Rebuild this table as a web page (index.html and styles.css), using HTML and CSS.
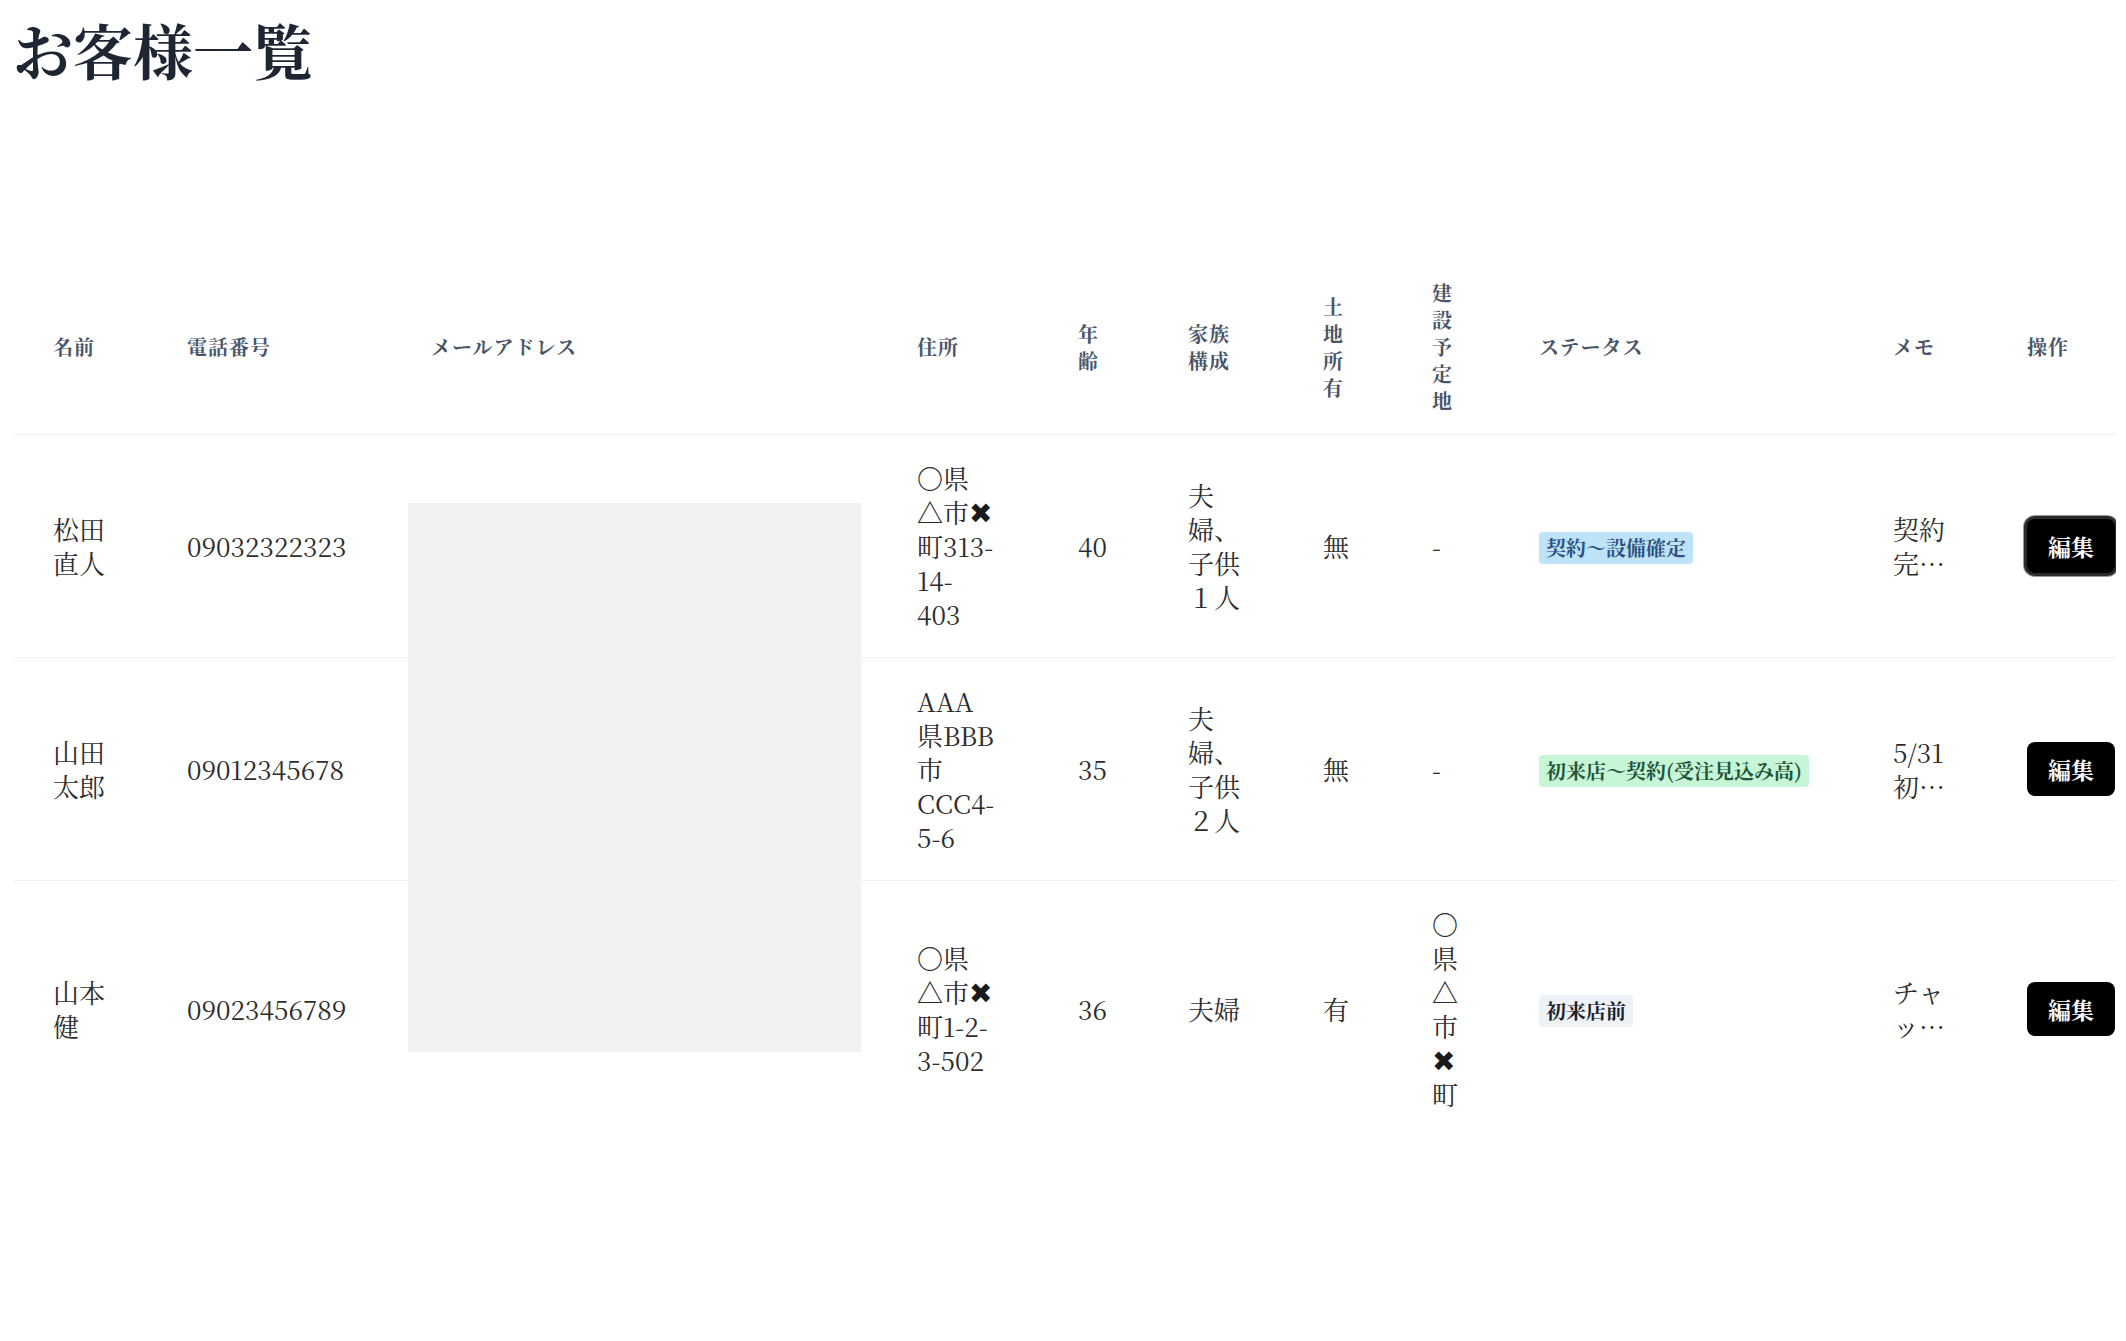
FILE: index.html
```html
<!DOCTYPE html>
<html lang="ja">
<head>
<meta charset="utf-8">
<title>お客様一覧</title>
<link rel="stylesheet" href="styles.css">
</head>
<body>
<div class="page">
  <h1 class="title">お客様一覧</h1>
  <div class="table-wrap">
    <table class="customers">
      <colgroup>
        <col class="c-name"><col class="c-phone"><col class="c-email"><col class="c-addr"><col class="c-age"><col class="c-family"><col class="c-land"><col class="c-site"><col class="c-status"><col class="c-memo"><col class="c-op">
      </colgroup>
      <thead>
        <tr>
          <th>名前</th><th>電話番号</th><th>メールアドレス</th><th>住所</th><th>年齢</th><th>家族構成</th><th>土地所有</th><th>建設予定地</th><th>ステータス</th><th>メモ</th><th>操作</th>
        </tr>
      </thead>
      <tbody>
        <tr>
          <td>松田直人</td>
          <td>09032322323</td>
          <td></td>
          <td>〇県<br>△市<span class="x">✖</span><br>町313-<br>14-<br>403</td>
          <td>40</td>
          <td>夫婦、子供１人</td>
          <td>無</td>
          <td>-</td>
          <td><span class="badge badge-blue">契約〜設備確定</span></td>
          <td><div class="memo">契約完了済み</div></td>
          <td><button class="edit edit-focus" type="button">編集</button></td>
        </tr>
        <tr>
          <td>山田太郎</td>
          <td>09012345678</td>
          <td></td>
          <td>AAA<br>県BBB<br>市<br>CCC4-<br>5-6</td>
          <td>35</td>
          <td>夫婦、子供２人</td>
          <td>無</td>
          <td>-</td>
          <td><span class="badge badge-green">初来店〜契約(受注見込み高)</span></td>
          <td><div class="memo">5/31初回来店</div></td>
          <td><button class="edit" type="button">編集</button></td>
        </tr>
        <tr>
          <td>山本健</td>
          <td>09023456789</td>
          <td></td>
          <td>〇県<br>△市<span class="x">✖</span><br>町1-2-<br>3-502</td>
          <td>36</td>
          <td>夫婦</td>
          <td>有</td>
          <td>〇県△市<span class="x">✖</span>町</td>
          <td><span class="badge badge-gray">初来店前</span></td>
          <td><div class="memo">チャット問い合わせ</div></td>
          <td><button class="edit" type="button">編集</button></td>
        </tr>
      </tbody>
    </table>
    <div class="mask"></div>
  </div>
</div>
</body>
</html>
```

FILE: styles.css
```css
html, body {
  margin: 0;
  padding: 0;
  background: #ffffff;
}

body {
  font-family: "Noto Serif CJK JP", "Liberation Serif", "Noto Sans CJK JP", serif;
  color: #2d2d2d;
}

.page {
  padding: 13px 10px 40px 13px;
}

.title {
  margin: 0;
  font-size: 60px;
  line-height: 72px;
  font-weight: 700;
  color: #1f2633;
}

.table-wrap {
  position: relative;
  margin-top: 174px;
  overflow: hidden;
}

.customers {
  width: 100%;
  table-layout: fixed;
  border-collapse: collapse;
}

.c-name { width: 134px; }
.c-phone { width: 244px; }
.c-email { width: 486px; }
.c-addr { width: 161px; }
.c-age { width: 110px; }
.c-family { width: 135px; }
.c-land { width: 109px; }
.c-site { width: 107px; }
.c-status { width: 354px; }
.c-memo { width: 134px; }
.c-op { width: 129px; }

.customers th {
  padding: 20px 40px;
  text-align: left;
  vertical-align: middle;
  font-size: 20px;
  line-height: 27px;
  font-weight: 700;
  letter-spacing: 1px;
  color: #4a5568;
  border-bottom: 1px solid #edf2f7;
}

.customers td {
  padding: 26px 40px;
  vertical-align: middle;
  font-size: 26px;
  line-height: 34px;
  color: #2d2d2d;
  border-bottom: 1px solid #edf2f7;
}

.customers tbody tr:last-child td {
  border-bottom: none;
}

.x {
  font-family: "DejaVu Sans", sans-serif;
  font-weight: 400;
  font-size: 28px;
  line-height: 1;
  color: #1a1a1a;
}

.badge {
  display: inline-block;
  padding: 4px 7px;
  border-radius: 4px;
  font-size: 20px;
  line-height: 24px;
  font-weight: 700;
  white-space: nowrap;
}

.badge-blue { background: #bee3f8; color: #2c5282; }
.badge-green { background: #c6f6d5; color: #22543d; }
.badge-gray { background: #edf2f7; color: #1a202c; }

.memo {
  display: -webkit-box;
  -webkit-box-orient: vertical;
  -webkit-line-clamp: 2;
  overflow: hidden;
}

.edit {
  display: inline-block;
  height: 54px;
  padding: 0 21px;
  border: none;
  border-radius: 8px;
  background: #000000;
  color: #ffffff;
  font-family: inherit;
  font-size: 23px;
  font-weight: 700;
  white-space: nowrap;
  cursor: pointer;
}

.edit-focus {
  box-shadow: 0 0 0 3px #2a2a2a, 0 0 0 4px #9a9a9a;
}

.mask {
  position: absolute;
  left: 395px;
  top: 244px;
  width: 453px;
  height: 549px;
  background: #f1f1f1;
}
```
